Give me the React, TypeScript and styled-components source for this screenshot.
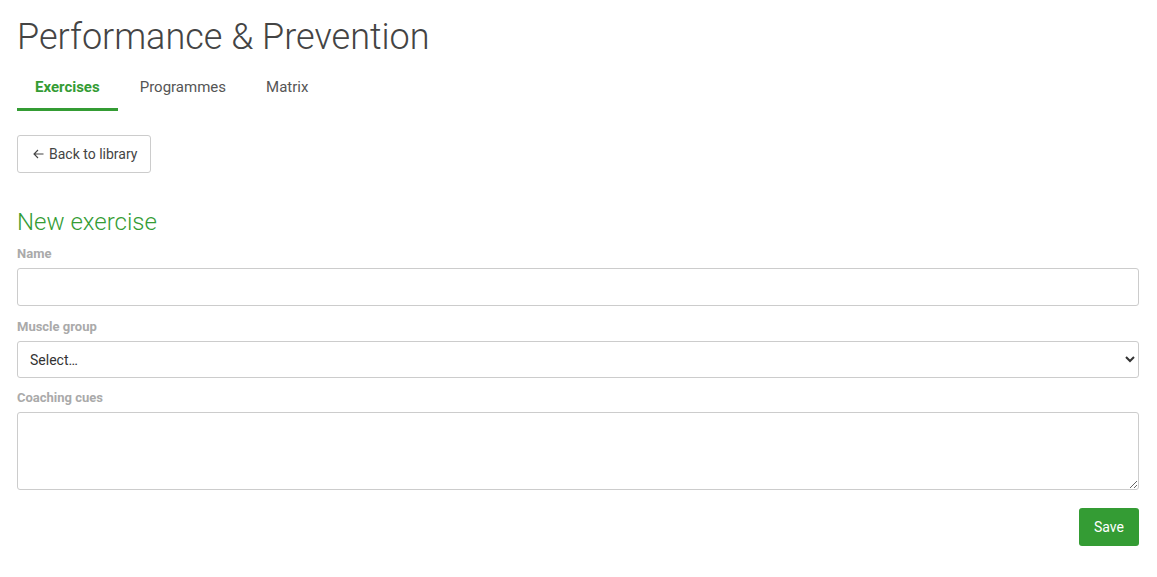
import React, { useState } from 'react'
import styled, { createGlobalStyle } from 'styled-components'

const GREEN = '#349c34'

const Global = createGlobalStyle`
  body {
    margin: 0;
    background: #fff;
    font-family: Roboto, "Liberation Sans", sans-serif;
    color: #444;
  }
`

const Page = styled.div`
  padding: 15px 18px 20px 17px;
`

const Title = styled.h1`
  margin: 0;
  font-size: 36px;
  font-weight: 300;
  line-height: 44px;
  color: #444;
`

const Tabs = styled.nav`
  display: flex;
  gap: 4px;
  margin-top: 7px;
`

const Tab = styled.button<{ $active?: boolean }>`
  box-sizing: border-box;
  border: 0;
  background: none;
  padding: 0 18px;
  height: 45px;
  font-family: inherit;
  font-size: 15px;
  font-weight: ${(p) => (p.$active ? 700 : 400)};
  color: ${(p) => (p.$active ? GREEN : '#555')};
  border-bottom: 3px solid ${(p) => (p.$active ? GREEN : 'transparent')};
  cursor: pointer;
`

const BackButton = styled.button`
  display: flex;
  align-items: center;
  gap: 5px;
  box-sizing: border-box;
  margin-top: 24px;
  height: 38px;
  padding: 0 13px 0 15px;
  background: #fff;
  border: 1px solid #ccc;
  border-radius: 3px;
  font-family: inherit;
  font-size: 14px;
  color: #444;
  cursor: pointer;
`

const SectionTitle = styled.h2`
  margin: 34px 0 9px;
  font-size: 24px;
  font-weight: 300;
  line-height: 30px;
  color: ${GREEN};
`

const Field = styled.div`
  display: flex;
  flex-direction: column;
`

const Label = styled.label`
  font-size: 13px;
  font-weight: 700;
  color: #aaa;
  line-height: 16px;
  margin: 0 0 6px;
`

const inputBase = `
  box-sizing: border-box;
  width: 100%;
  border: 1px solid #ccc;
  border-radius: 3px;
  font-family: Roboto, "Liberation Sans", sans-serif;
  font-size: 14px;
  color: #333;
  background: #fff;
  margin: 0 0 13px;
`

const Input = styled.input`
  ${inputBase}
  height: 38px;
  padding: 0 12px;
`

const Select = styled.select`
  ${inputBase}
  height: 37px;
  padding: 0 8px;
  margin-bottom: 12px;
`

const TextArea = styled.textarea`
  ${inputBase}
  display: block;
  height: 78px;
  padding: 8px 12px;
  resize: vertical;
  margin-bottom: 18px;
`

const Actions = styled.div`
  display: flex;
  justify-content: flex-end;
`

const SaveButton = styled.button`
  height: 38px;
  padding: 0 15px;
  border: 0;
  border-radius: 3px;
  background: ${GREEN};
  color: #fff;
  font-family: inherit;
  font-size: 14px;
  cursor: pointer;
`

const ArrowLeft = () => (
  <svg width="11" height="10" viewBox="0 0 11 10" fill="none" stroke="#444" strokeWidth="1.1">
    <path d="M10.5 5H1M5 1L1 5l4 4" />
  </svg>
)

export default function App() {
  const [tab, setTab] = useState('Exercises')
  return (
    <Page>
      <Global />
      <Title>Performance &amp; Prevention</Title>
      <Tabs>
        {['Exercises', 'Programmes', 'Matrix'].map((t) => (
          <Tab key={t} $active={tab === t} onClick={() => setTab(t)}>
            {t}
          </Tab>
        ))}
      </Tabs>
      <BackButton>
        <ArrowLeft />
        Back to library
      </BackButton>
      <SectionTitle>New exercise</SectionTitle>
      <Field>
        <Label>Name</Label>
        <Input />
      </Field>
      <Field>
        <Label>Muscle group</Label>
        <Select defaultValue="">
          <option value="">Select…</option>
        </Select>
      </Field>
      <Field>
        <Label>Coaching cues</Label>
        <TextArea />
      </Field>
      <Actions>
        <SaveButton>Save</SaveButton>
      </Actions>
    </Page>
  )
}
